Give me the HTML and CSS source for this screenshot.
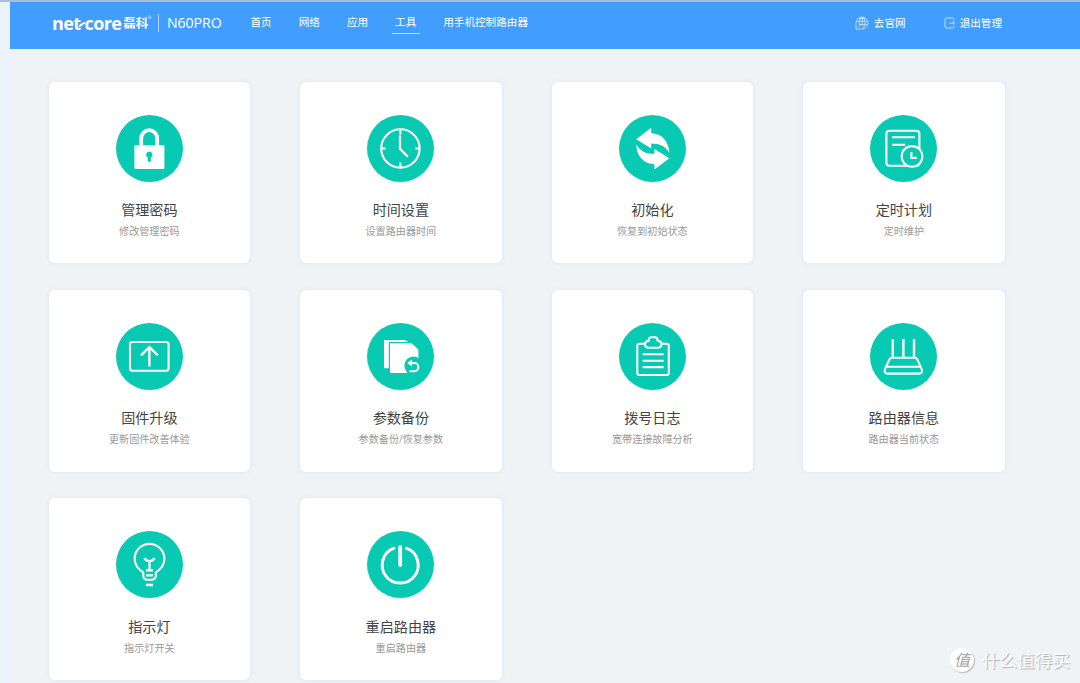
FILE: index.html
```
<!DOCTYPE html>
<html lang="zh-CN">
<head>
    <meta charset="UTF-8">
    <meta name="viewport" content="width=device-width, initial-scale=1.0">
    <title>N60PRO</title>
    <link rel="stylesheet" href="styles.css">
</head>
<body>
    <div class="page">
        <header class="header">
            <div class="logo">
                <span class="logo-en">net</span>
                <svg class="logo-dash" viewBox="0 0 6 8"><path d="M0 6 C2 6 3 3 6 3" fill="none" stroke="#fff" stroke-width="2"/></svg>
                <span class="logo-en">core</span>
                <span class="logo-cn">磊科</span>
                <span class="logo-reg">®</span>
            </div>
            <span class="model">N60PRO</span>
            <nav class="nav">
                <a>首页</a>
                <a>网络</a>
                <a>应用</a>
                <a class="active">工具</a>
                <a>用手机控制路由器</a>
            </nav>
            <div class="links">
                <a>
                    <svg width="14" height="14" viewBox="0 0 14 14" fill="none" stroke="#fff" stroke-width="0.8"><path d="M1 13 V7 A6 6 0 1 1 7 13 Z"/><path d="M4 2.5 H10.5 M1.5 5.3 H12.5 M4 8.6 H12.5 M7.3 1 V10 M7 1 C3.5 4 4 8 5 10 M7.5 1 C11 4 10.5 9 8 12.5 M3 11 L5.5 8.5"/></svg>
                    去官网
                </a>
                <a>
                    <svg width="11" height="12" viewBox="0 0 11 12" fill="none" stroke="#fff" stroke-width="0.9"><path d="M10 3.5 V2.5 Q10 1 8.5 1 H2.5 Q1 1 1 2.5 V9.5 Q1 11 2.5 11 H8.5 Q10 11 10 9.5 V8.5"/><path d="M5 6 H10.3 M8.6 4.4 L10.3 6 L8.6 7.6"/></svg>
                    退出管理
                </a>
            </div>
        </header>

        <main class="tools">
            <div class="card">
                <svg class="icon" viewBox="0 0 67 67">
                    <path d="M25.2 31 V23.5 A8 8.3 0 0 1 41.2 23.5 V31" stroke-width="3.8"/>
                    <rect class="fill" x="18.4" y="30.2" width="30" height="23.8" rx="1"/>
                    <path class="hole" d="M33.3 36.6 a3.3 3.3 0 0 1 1.5 6.2 V46.8 h-3 V42.8 a3.3 3.3 0 0 1 1.5 -6.2 Z"/>
                </svg>
                <h3>管理密码</h3>
                <p>修改管理密码</p>
            </div>
            <div class="card">
                <svg class="icon" viewBox="0 0 67 67">
                    <circle cx="33.4" cy="33.5" r="19.2"/>
                    <path d="M33.4 14.5 V19.5 M33.4 47.5 V52.5 M14.5 33.5 H18.5 M48.3 33.5 H52.3"/>
                    <path d="M33 21.5 V33.7 L40.2 41" stroke-width="2.3" stroke-linecap="round"/>
                </svg>
                <h3>时间设置</h3>
                <p>设置路由器时间</p>
            </div>
            <div class="card">
                <svg class="icon" viewBox="0 0 67 67">
                    <path class="fill" d="M17.2 24.2 L32.2 12.8 V18.2 C43 18.5 50 26.5 50.4 38 C46.5 31.5 41 28.6 32.2 28.6 V33.4 Z"/>
                    <path class="fill" d="M50.4 43.2 L35.4 54.6 V49.2 C24.6 48.9 17.6 40.9 17.2 29.4 C21.1 35.9 26.6 38.8 35.4 38.8 V34 Z"/>
                </svg>
                <h3>初始化</h3>
                <p>恢复到初始状态</p>
            </div>
            <div class="card">
                <svg class="icon" viewBox="0 0 67 67">
                    <rect x="16.4" y="15.8" width="33" height="35" rx="3"/>
                    <path d="M22 22.2 H44.8 M22 29.8 H35.2"/>
                    <circle class="hole line" cx="42" cy="41.4" r="10.3"/>
                    <path d="M41.4 37 V42.9 H47"/>
                </svg>
                <h3>定时计划</h3>
                <p>定时维护</p>
            </div>
            <div class="card">
                <svg class="icon" viewBox="0 0 67 67">
                    <rect x="14" y="19" width="38.6" height="28.8" rx="2.5"/>
                    <path d="M33.4 42.6 V24 M25.6 31.8 L33.4 24 L41.2 31.8" stroke-width="2.4" stroke-linecap="round"/>
                </svg>
                <h3>固件升级</h3>
                <p>更新固件改善体验</p>
            </div>
            <div class="card">
                <svg class="icon" viewBox="0 0 67 67">
                    <path class="fill" d="M17 17 H37.5 L41.5 19 H21.8 V45.3 H17 Z"/>
                    <path class="fill" d="M23 20.2 H44.6 L51.4 26.4 V50 H23 Z"/>
                    <circle class="hole" cx="46.5" cy="42.8" r="9.2"/>
                    <path d="M43.5 40 H47.3 A4.1 4.1 0 0 1 47.3 48.2 H42.5" stroke-width="2"/>
                    <path class="fill" d="M40.3 40 L45 36.6 V43.4 Z"/>
                </svg>
                <h3>参数备份</h3>
                <p>参数备份/恢复参数</p>
            </div>
            <div class="card">
                <svg class="icon" viewBox="0 0 67 67">
                    <path d="M26 20.7 H20.5 Q18.3 20.7 18.3 23 V49.7 Q18.3 52 20.5 52 H47.5 Q49.8 52 49.8 49.7 V23 Q49.8 20.7 47.5 20.7 H42.5"/>
                    <path d="M29.5 18 Q29.8 14.3 32 14.3 H36 Q38.5 14.3 38.8 18 Q42.5 18 42.5 21 Q42.5 24.8 38.8 24.8 H29.8 Q26 24.8 26 21 Q26 18 29.5 18 Z"/>
                    <path d="M23.6 31.2 H44.6 M23.6 37.7 H44.6 M23.6 44.1 H44.6"/>
                </svg>
                <h3>拨号日志</h3>
                <p>宽带连接故障分析</p>
            </div>
            <div class="card">
                <svg class="icon" viewBox="0 0 67 67">
                    <path d="M22.8 16 V34.5 M33.4 16 V34.5 M44 16 V34.5" stroke-width="2.4"/>
                    <path d="M21.8 34.8 H45 Q46.6 34.8 47.2 36.3 L51.6 45.8 Q53 50.6 49.5 50.6 H17.2 Q13.6 50.6 15.1 45.8 L19.5 36.3 Q20.2 34.8 21.8 34.8 Z M16.2 43.8 H50.6"/>
                </svg>
                <h3>路由器信息</h3>
                <p>路由器当前状态</p>
            </div>
            <div class="card">
                <svg class="icon" viewBox="0 0 67 67">
                    <path d="M27.3 45 V41.5 C22 38 18.6 33.8 18.6 27.8 A14.9 14.9 0 0 1 48.4 27.8 C48.4 33.8 45 38 39.8 41.5 V45 Q39.5 48.7 35.5 48.7 H31.5 Q27.6 48.7 27.3 45"/>
                    <path d="M28.4 27 Q29.5 29.8 33.5 30.2 Q37.5 29.8 38.6 27 M33.5 30 V39.5 M30 39.3 H37 M30 44.3 H37 M30 54 H37" stroke-width="2.3"/>
                </svg>
                <h3>指示灯</h3>
                <p>指示灯开关</p>
            </div>
            <div class="card">
                <svg class="icon" viewBox="0 0 67 67">
                    <path d="M27 17.2 A18 18 0 1 0 39.4 17.2" stroke-width="3" stroke-linecap="round"/>
                    <path d="M33.2 16 V34" stroke-width="3.8" stroke-linecap="round"/>
                </svg>
                <h3>重启路由器</h3>
                <p>重启路由器</p>
            </div>
        </main>
    </div>

    <div class="watermark">
        <span class="badge">值</span>
        <span>什么值得买</span>
    </div>
</body>
</html>
```
FILE: styles.css
```
* {
    box-sizing: border-box;
}
body {
    margin: 0;
    padding-left: 10px;
    height: 683px;
    overflow: hidden;
    background: #edf2fb;
    border-top: 2px solid #a9bdd9;
    font-family: "Open Sans", "Noto Sans CJK SC", sans-serif;
}
.page {
    height: 681px;
    background: #eff3f6;
}
.header {
    display: flex;
    align-items: center;
    height: 47px;
    padding: 0 78px 6px 42px;
    background: #419eff;
    color: #fff;
}
.logo {
    display: flex;
    align-items: center;
    width: 107px;
    height: 18px;
    border-right: 1px solid #b5d9ff;
}
.logo-en {
    font-size: 18px;
    font-weight: 700;
    line-height: 18px;
    letter-spacing: -0.6px;
}
.logo-dash {
    width: 6px;
    height: 8px;
    margin: 2px -1px 0 -1px;
}
.logo-cn {
    margin: 3px 0 0 2px;
    font-size: 12.4px;
    font-weight: 700;
    line-height: 14px;
}
.logo-reg {
    align-self: flex-start;
    font-size: 4px;
    line-height: 8px;
}
.model {
    width: 88px;
    padding-left: 8px;
    font-size: 14.2px;
    line-height: 18px;
    letter-spacing: -0.1px;
}
.nav {
    display: flex;
    gap: 20px;
    font-size: 10.6px;
    line-height: 16px;
}
.nav a {
    padding: 3px 3.5px;
    border-bottom: 1px solid transparent;
}
.nav .active {
    border-bottom-color: #c9e3ff;
}
.links {
    display: flex;
    gap: 38px;
    margin-left: auto;
    font-size: 10.6px;
    line-height: 16px;
}
.links a {
    display: flex;
    align-items: center;
    gap: 5px;
}
.links svg {
    opacity: 0.75;
}
.tools {
    display: grid;
    grid-template-columns: repeat(4, 201.5px);
    grid-auto-rows: 181.7px;
    gap: 26.7px 50px;
    padding: 32.7px 0 0 38.6px;
}
.card {
    display: flex;
    flex-direction: column;
    align-items: center;
    padding-top: 33px;
    background: #fff;
    border-radius: 6px;
    box-shadow: 0 0 4px rgba(90, 110, 130, 0.12);
    text-align: center;
}
.card h3 {
    margin: 18.4px 0 0;
    color: #444;
    font-size: 14.1px;
    font-weight: 400;
    line-height: 20px;
}
.card p {
    margin: 3px 0 0;
    color: #999;
    font-size: 10.1px;
    line-height: 16px;
}
.icon {
    width: 67px;
    height: 67px;
    border-radius: 50%;
    background: #08c9b2;
    fill: none;
    stroke: #fff;
    stroke-width: 2.1;
}
.icon .fill {
    fill: #fff;
    stroke: none;
}
.icon .hole {
    fill: #08c9b2;
    stroke: none;
}
.icon .line {
    stroke: #fff;
}
.watermark {
    position: absolute;
    left: 950px;
    top: 648px;
    display: flex;
    align-items: center;
    gap: 8px;
    color: #fff;
    font-size: 17.6px;
    line-height: 24px;
    text-shadow: 1px 1px 1px #a9adb2;
}
.badge {
    width: 24px;
    height: 24px;
    border-radius: 50%;
    background: #fff;
    box-shadow: 1px 1px 1px #b5b9be;
    color: #a4a7ab;
    font-size: 16px;
    font-style: italic;
    text-align: center;
    text-shadow: none;
}
```
